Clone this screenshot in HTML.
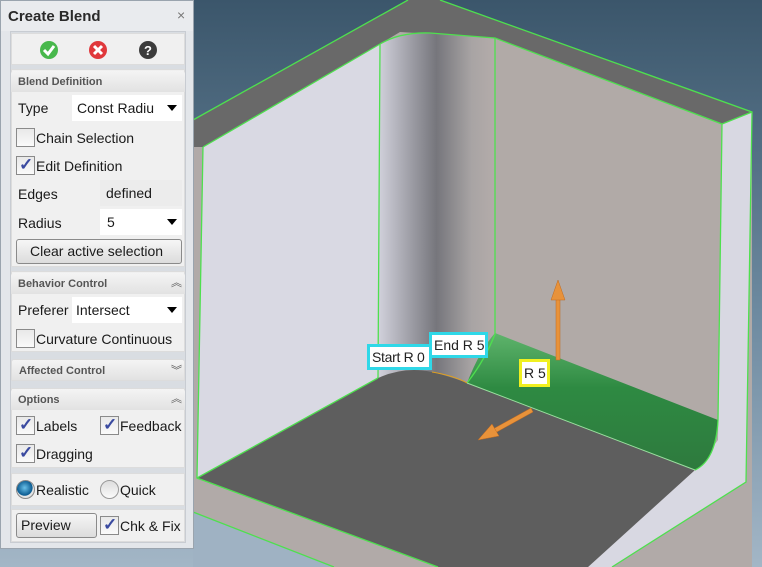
<!DOCTYPE html>
<html><head><meta charset="utf-8"><style>
*{box-sizing:border-box;margin:0;padding:0}
body{width:762px;height:567px;overflow:hidden;position:relative;font-family:"Liberation Sans",sans-serif;background:linear-gradient(#3b566b,#6d8aa0 55%,#a3b6c6)}
svg{position:absolute;left:0;top:0}
#panel{position:absolute;left:0;top:0;width:194px;height:549px;background:#e3e6ea;border:1px solid #9aa4ae}
.t{position:absolute;font-size:14px;color:#1a1a1a;white-space:nowrap}
.sec{position:absolute;left:10px;width:174px;background:#f0f0f0;border:1px solid #dcdcdc}
.hd{position:absolute;left:10px;width:174px;height:21px;background:linear-gradient(#f4f4f4,#e2e2e2);font-size:11px;font-weight:bold;color:#555;padding:5px 0 0 7px;border-radius:3px 3px 0 0}
.cb{position:absolute;width:19px;height:19px;border:1px solid #8a8a8a;background:linear-gradient(#e8e8e8,#fafafa)}
.cb.c::after{content:"✓";position:absolute;left:2px;top:-2px;font-size:17px;color:#3a4aa0;font-weight:bold}
.dd{position:absolute;background:#fff;height:26px}
.dd::after{content:"";position:absolute;right:5px;top:10px;border:5px solid transparent;border-top:6px solid #000;border-bottom:0}
.btn{position:absolute;height:25px;border:1px solid #8a8a8a;border-radius:3px;background:linear-gradient(#f6f6f6,#dcdcdc);font-size:14px;color:#1a1a1a;white-space:nowrap}
.lab{position:absolute;background:#fff;font-size:14px;line-height:16px;color:#222;padding:2px 0 0 2px;border:3px solid #2fd8e8;white-space:nowrap;overflow:hidden}
</style></head><body>
<svg width="762" height="567" viewBox="0 0 762 567">
<defs>
<linearGradient id="fil" x1="0" x2="1"><stop offset="0" stop-color="#d2d2dc"/><stop offset=".3" stop-color="#9a9aa2"/><stop offset=".5" stop-color="#76767c"/><stop offset=".8" stop-color="#a8a4a4"/><stop offset="1" stop-color="#b4acaa"/></linearGradient>
<linearGradient id="gr" x1="0" y1="0" x2="0" y2="1"><stop offset="0" stop-color="#5fb46c"/><stop offset=".4" stop-color="#2e8a42"/><stop offset="1" stop-color="#2e7a3e"/></linearGradient>
</defs>
<polygon points="193,120 408,0 440,0 752,112 752,567 193,567" fill="#b1aaa8"/>
<polygon points="193,512 334,567 193,567" fill="#9fb2c3"/>
<polygon points="193,120 408,0 440,0 752,112 722,124 495,38 400,32 380,44 203,147 193,147" fill="#696969"/>
<polygon points="722,124 752,112 746,482 612,567 588,567 695,470 718,440" fill="#d8d8e2"/>
<polygon points="203,147 380,44 378,378 197,478" fill="#d9d9e3"/>
<polygon points="495,38 722,124 718,420 495,334" fill="#b1aaa7"/>
<path d="M380,44 Q400,32 430,33 L495,38 L495,334 L467,383 L430,372 Q405,366 378,378 Z" fill="url(#fil)"/>
<path d="M495,333 L718,420 Q716,460 695,470 L467,383 Q480,350 495,333 Z" fill="url(#gr)"/>
<path d="M197,478 L378,378 Q405,366 432,372 Q455,378 467,383 L695,470 L588,567 L438,567 Z" fill="#5e5e5e"/>
<g fill="none" stroke="#4ee04e" stroke-width="1.3">
<path d="M193,120 L408,0 M440,0 L752,112 L746,482 L612,567"/>
<path d="M203,147 L380,44 Q400,32 430,33 L495,38 L722,124 L718,420 Q716,460 695,470"/>
<path d="M380,44 L378,378 M495,38 L495,334 Q485,360 467,383"/>
<path d="M203,147 L197,478 L438,567 M193,512 L334,567 M722,124 L752,112"/>
<path d="M197,478 L378,378" /><path d="M467,383 L695,470" stroke="#9be0a0" stroke-width="1"/>
</g>
<path d="M432,372 Q455,376 467,383" stroke="#e0a020" fill="none"/>
<g fill="#e8923a" stroke="#c06a20" stroke-width=".5">
<rect x="556" y="296" width="4" height="64"/>
<polygon points="558,280 551,300 565,300"/>
<polygon points="531,408 533,412 495,433 493,429"/>
<polygon points="478,440 492,424 499,436"/>
</g>
</svg>
<div class="lab" style="left:367px;top:344px;height:26px;width:65px;letter-spacing:-0.3px">Start R 0</div>
<div class="lab" style="left:429px;top:332px;height:26px;width:59px">End R 5</div>
<div class="lab" style="left:519px;top:359px;height:28px;width:31px;border-color:#f0f020;padding-top:3px">R 5</div>

<div id="panel">
<div style="position:absolute;left:0;top:0;width:192px;height:30px;background:#e9ebee"></div>
<div class="t" style="left:7px;top:7px;font-weight:bold;font-size:15px;color:#2a2a2a">Create Blend</div>
<div class="t" style="left:176px;top:6px;color:#777">×</div>
<div style="position:absolute;left:9px;top:30px;width:176px;height:512px;background:#d9dde2;border:1px solid #c8ccd2"></div>
<div class="sec" style="top:32px;height:32px;background:#f0f0f0"></div>
<svg style="left:38px;top:39px" width="20" height="20"><circle cx="10" cy="10" r="9" fill="#48b84c"/><path d="M5,10 L9,14 L15,6" stroke="#fff" stroke-width="3" fill="none"/></svg>
<svg style="left:87px;top:39px" width="20" height="20"><circle cx="10" cy="10" r="9" fill="#e0383c"/><path d="M6,6 L14,14 M14,6 L6,14" stroke="#fff" stroke-width="3"/></svg>
<svg style="left:137px;top:39px" width="20" height="20"><circle cx="10" cy="10" r="9" fill="#3c3c3c"/><text x="10" y="15" font-size="13" font-weight="bold" fill="#fff" text-anchor="middle" font-family="Liberation Sans">?</text></svg>

<div class="sec" style="top:68px;height:198px"></div>
<div class="hd" style="top:70px">Blend Definition</div>
<div class="t" style="left:17px;top:99px">Type</div>
<div class="dd" style="left:71px;top:94px;width:110px"></div>
<div class="t" style="left:76px;top:99px">Const Radiu</div>
<div class="cb" style="left:15px;top:127px"></div><div class="t" style="left:35px;top:129px">Chain Selection</div>
<div class="cb c" style="left:15px;top:155px"></div><div class="t" style="left:35px;top:157px">Edit Definition</div>
<div class="t" style="left:17px;top:185px">Edges</div>
<div style="position:absolute;left:99px;top:179px;width:82px;height:26px;background:#ececec"></div>
<div class="t" style="left:105px;top:184px">defined</div>
<div class="t" style="left:17px;top:214px">Radius</div>
<div class="dd" style="left:99px;top:208px;width:82px"></div>
<div class="t" style="left:106px;top:213px">5</div>
<div class="btn" style="left:15px;top:238px;width:166px;padding:3px 0 0 13px">Clear active selection</div>

<div class="sec" style="top:270px;height:81px"></div>
<div class="hd" style="top:272px">Behavior Control</div>
<div class="t" style="left:170px;top:273px;font-size:11px;color:#555">︽</div>
<div class="t" style="left:17px;top:301px">Preferer</div>
<div class="dd" style="left:71px;top:296px;width:110px"></div>
<div class="t" style="left:75px;top:301px">Intersect</div>
<div class="cb" style="left:15px;top:328px"></div><div class="t" style="left:35px;top:330px">Curvature Continuous</div>

<div class="hd" style="top:358px;height:22px;border:1px solid #dcdcdc">Affected Control</div>
<div class="t" style="left:170px;top:361px;font-size:11px;color:#555">︾</div>

<div class="sec" style="top:387px;height:80px"></div>
<div class="hd" style="top:388px">Options</div>
<div class="t" style="left:170px;top:389px;font-size:11px;color:#555">︽</div>
<div class="cb c" style="left:15px;top:415px"></div><div class="t" style="left:35px;top:417px">Labels</div>
<div class="cb c" style="left:99px;top:415px"></div><div class="t" style="left:119px;top:417px">Feedback</div>
<div class="cb c" style="left:15px;top:443px"></div><div class="t" style="left:35px;top:445px">Dragging</div>

<div class="sec" style="top:472px;height:33px"></div>
<div style="position:absolute;left:15px;top:479px;width:19px;height:19px;border-radius:50%;background:radial-gradient(circle at 45% 40%,#6ac0e8,#0a5a90 55%,#e8e8e8 60%,#ccc);border:1px solid #888"></div>
<div class="t" style="left:35px;top:481px">Realistic</div>
<div style="position:absolute;left:99px;top:479px;width:19px;height:19px;border-radius:50%;background:linear-gradient(#ddd,#fafafa);border:1px solid #999"></div>
<div class="t" style="left:119px;top:481px">Quick</div>

<div class="sec" style="top:508px;height:33px"></div>
<div class="btn" style="left:15px;top:512px;width:81px;padding:3px 0 0 4px">Preview</div>
<div class="cb c" style="left:99px;top:515px"></div><div class="t" style="left:119px;top:517px">Chk &amp; Fix</div>
</div>
</body></html>
